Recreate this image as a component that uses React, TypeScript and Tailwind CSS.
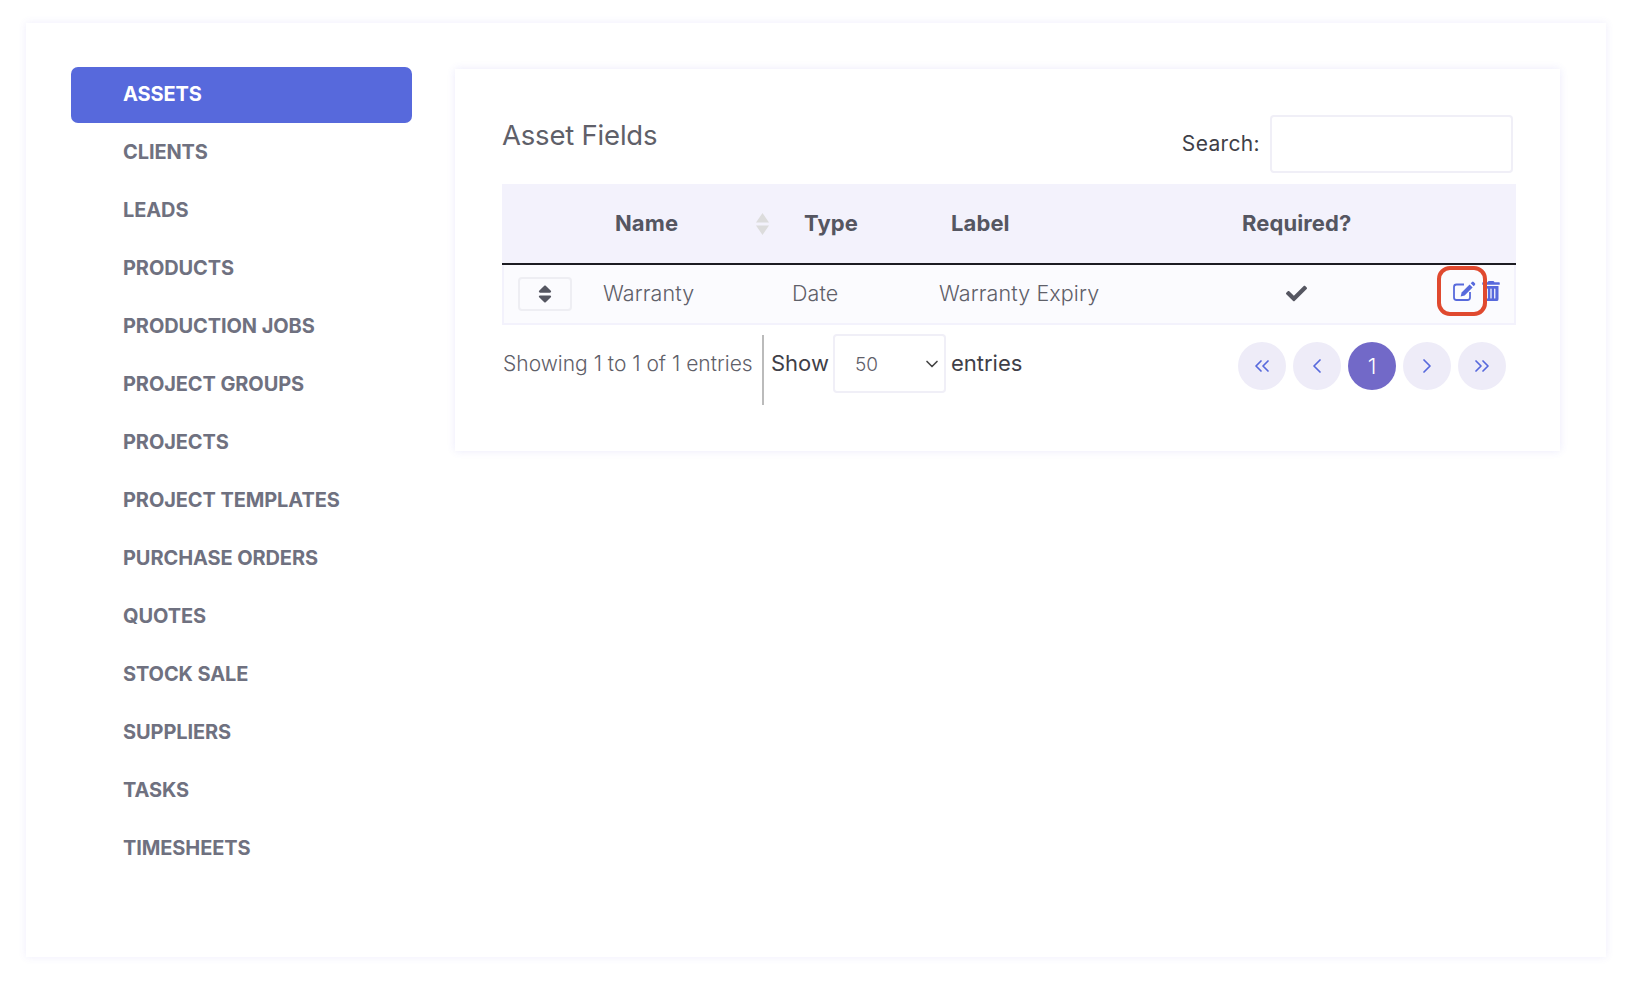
import { ChevronDown, ChevronLeft, ChevronRight, ChevronsLeft, ChevronsRight } from "lucide-react";
import { FaCheck, FaSort, FaTrashAlt } from "react-icons/fa";

const navItems = [
  "ASSETS",
  "CLIENTS",
  "LEADS",
  "PRODUCTS",
  "PRODUCTION JOBS",
  "PROJECT GROUPS",
  "PROJECTS",
  "PROJECT TEMPLATES",
  "PURCHASE ORDERS",
  "QUOTES",
  "STOCK SALE",
  "SUPPLIERS",
  "TASKS",
  "TIMESHEETS",
];

const PageButton = ({ children, active }: { children: React.ReactNode; active?: boolean }) => (
  <div
    className={`flex h-12 w-12 items-center justify-center rounded-full text-[22px] font-light ${
      active ? "bg-[#7269c8] text-white" : "bg-[#eeecf8] text-[#5769dc]"
    }`}
  >
    {children}
  </div>
);

// outlined box with a solid pencil
const EditIcon = () => (
  <svg width="24" height="21" viewBox="0 0 24 21">
    <path
      d="M12 3.5H4.5A2.5 2.5 0 0 0 2 6V16.5A2.5 2.5 0 0 0 4.5 19H15.5A2.5 2.5 0 0 0 18 16.5V11"
      fill="none"
      stroke="currentColor"
      strokeWidth="1.8"
    />
    <path d="M17.6 3.4L20.6 6.4L12.6 14.4L8.6 15.4L9.6 11.4Z" fill="currentColor" />
    <path d="M18.7 2.3L20 1A1.2 1.2 0 0 1 21.7 1L22.9 2.2A1.2 1.2 0 0 1 22.9 3.9L21.7 5.3Z" fill="currentColor" />
  </svg>
);

const App = () => {
  return (
    <div className="min-h-[993px] bg-white pl-[26px] pr-[26px] pt-[23px] font-['Inter',sans-serif]">
      <div className="flex h-[934px] items-start gap-[43px] bg-white pl-[45px] pr-[46px] pt-[44px] shadow-[0_0_8px_rgba(90,80,220,0.10)]">
        {/* sidebar */}
        <div className="flex w-[341px] shrink-0 flex-col gap-[2px]">
          {navItems.map((item, i) => (
            <div
              key={item}
              className={`flex h-[56px] items-center rounded-[7px] pb-[2px] pl-[52px] text-[20px] font-bold tracking-[-0.1px] ${
                i === 0 ? "bg-[#5769dc] text-white" : "text-[#6f7180]"
              }`}
            >
              {item}
            </div>
          ))}
        </div>

        {/* panel */}
        <div className="mt-[2px] h-[382px] w-[1105px] bg-white pl-[47px] pr-[44px] shadow-[0_0_8px_rgba(90,80,220,0.12)]">
          <div className="flex h-[115px] items-start justify-between">
            <h2 className="mt-[50px] text-[27.5px] font-normal leading-[32px] tracking-[-0.2px] text-[#5f6069]">
              Asset Fields
            </h2>
            <div className="mr-[3px] mt-[46px] flex items-center gap-[10px]">
              <span className="text-[21px] tracking-[0.35px] text-[#3f3f48]">Search:</span>
              <div className="h-[58px] w-[243px] rounded-[4px] border-2 border-[#f0eff7] bg-white" />
            </div>
          </div>

          {/* table header */}
          <div className="flex h-[81px] w-[1014px] items-center border-b-2 border-[#1c1c22] bg-[#f3f2fc] text-[22px] font-bold tracking-[0.1px] text-[#555661]">
            <div className="w-[113px] shrink-0" />
            <div className="flex w-[164px] shrink-0 items-center justify-between">
              <span>Name</span>
              <svg width="13" height="22" viewBox="0 0 13 22" className="mr-[10px]" fill="#dcdcdc">
                <path d="M6.5 0 L13 9.5 H0 Z M0 12.5 H13 L6.5 22 Z" />
              </svg>
            </div>
            <div className="w-[147px] shrink-0 pl-[25px]">Type</div>
            <div className="w-[316px] shrink-0 pl-[25px]">Label</div>
            <div>Required?</div>
          </div>

          {/* table row */}
          <div className="relative flex h-[60px] w-[1014px] items-center border-x-2 border-b-2 border-[#f3f2fc] bg-[#fbfbfe] text-[21.5px] font-light tracking-[0.1px] text-[#5f6069]">
            <div className="w-[99px] shrink-0 pl-[14px]">
              <div className="flex h-[34px] w-[54px] items-center justify-center rounded-[4px] border-2 border-[#eeeef3]">
                <FaSort className="text-[22px] text-[#555661]" />
              </div>
            </div>
            <div className="w-[189px] shrink-0 pb-[2px]">Warranty</div>
            <div className="w-[147px] shrink-0 pb-[2px]">Date</div>
            <div className="w-[345px] shrink-0 pb-[2px]">Warranty Expiry</div>
            <FaCheck className="mb-[2px] ml-[2px] text-[21px] text-[#555661]" />
            <div className="mb-[6px] ml-[145px] flex items-center gap-[5px] text-[#5769dc]">
              <EditIcon />
              <FaTrashAlt className="text-[20px]" />
            </div>
            <div className="absolute left-[933px] top-[1px] h-[50px] w-[50px] rounded-[13px] border-[4px] border-[#e0492f]" />
          </div>

          {/* footer */}
          <div className="flex w-[1014px] items-start pt-[9px]">
            <div className="flex items-center">
              <div className="flex h-[70px] w-[262px] items-center border-r-2 border-[#bbbbbb] pb-[12px] pl-[1px] text-[21px] font-light text-[#5f6069]">
                Showing 1 to 1 of 1 entries
              </div>
              <span className="ml-[7px] pb-[12px] text-[22px] text-[#3f3f48]">Show</span>
              <div className="mb-[12px] ml-[4px] flex h-[59px] w-[113px] items-center justify-between rounded-[4px] border-2 border-[#f0eff7] pl-[20px] pr-[2px] text-[19px] font-light text-[#5f6069]">
                <span className="pt-[3px]">50</span>
                <ChevronDown size={20} strokeWidth={2} className="text-[#444444]" />
              </div>
              <span className="ml-[5px] pb-[12px] text-[22px] text-[#3f3f48]">entries</span>
            </div>
            <div className="ml-auto mr-[10px] mt-[8px] flex gap-[7px]">
              <PageButton><ChevronsLeft size={24} strokeWidth={1.75} /></PageButton>
              <PageButton><ChevronLeft size={24} strokeWidth={1.75} /></PageButton>
              <PageButton active>1</PageButton>
              <PageButton><ChevronRight size={24} strokeWidth={1.75} /></PageButton>
              <PageButton><ChevronsRight size={24} strokeWidth={1.75} /></PageButton>
            </div>
          </div>
        </div>
      </div>
    </div>
  );
};

export default App;
